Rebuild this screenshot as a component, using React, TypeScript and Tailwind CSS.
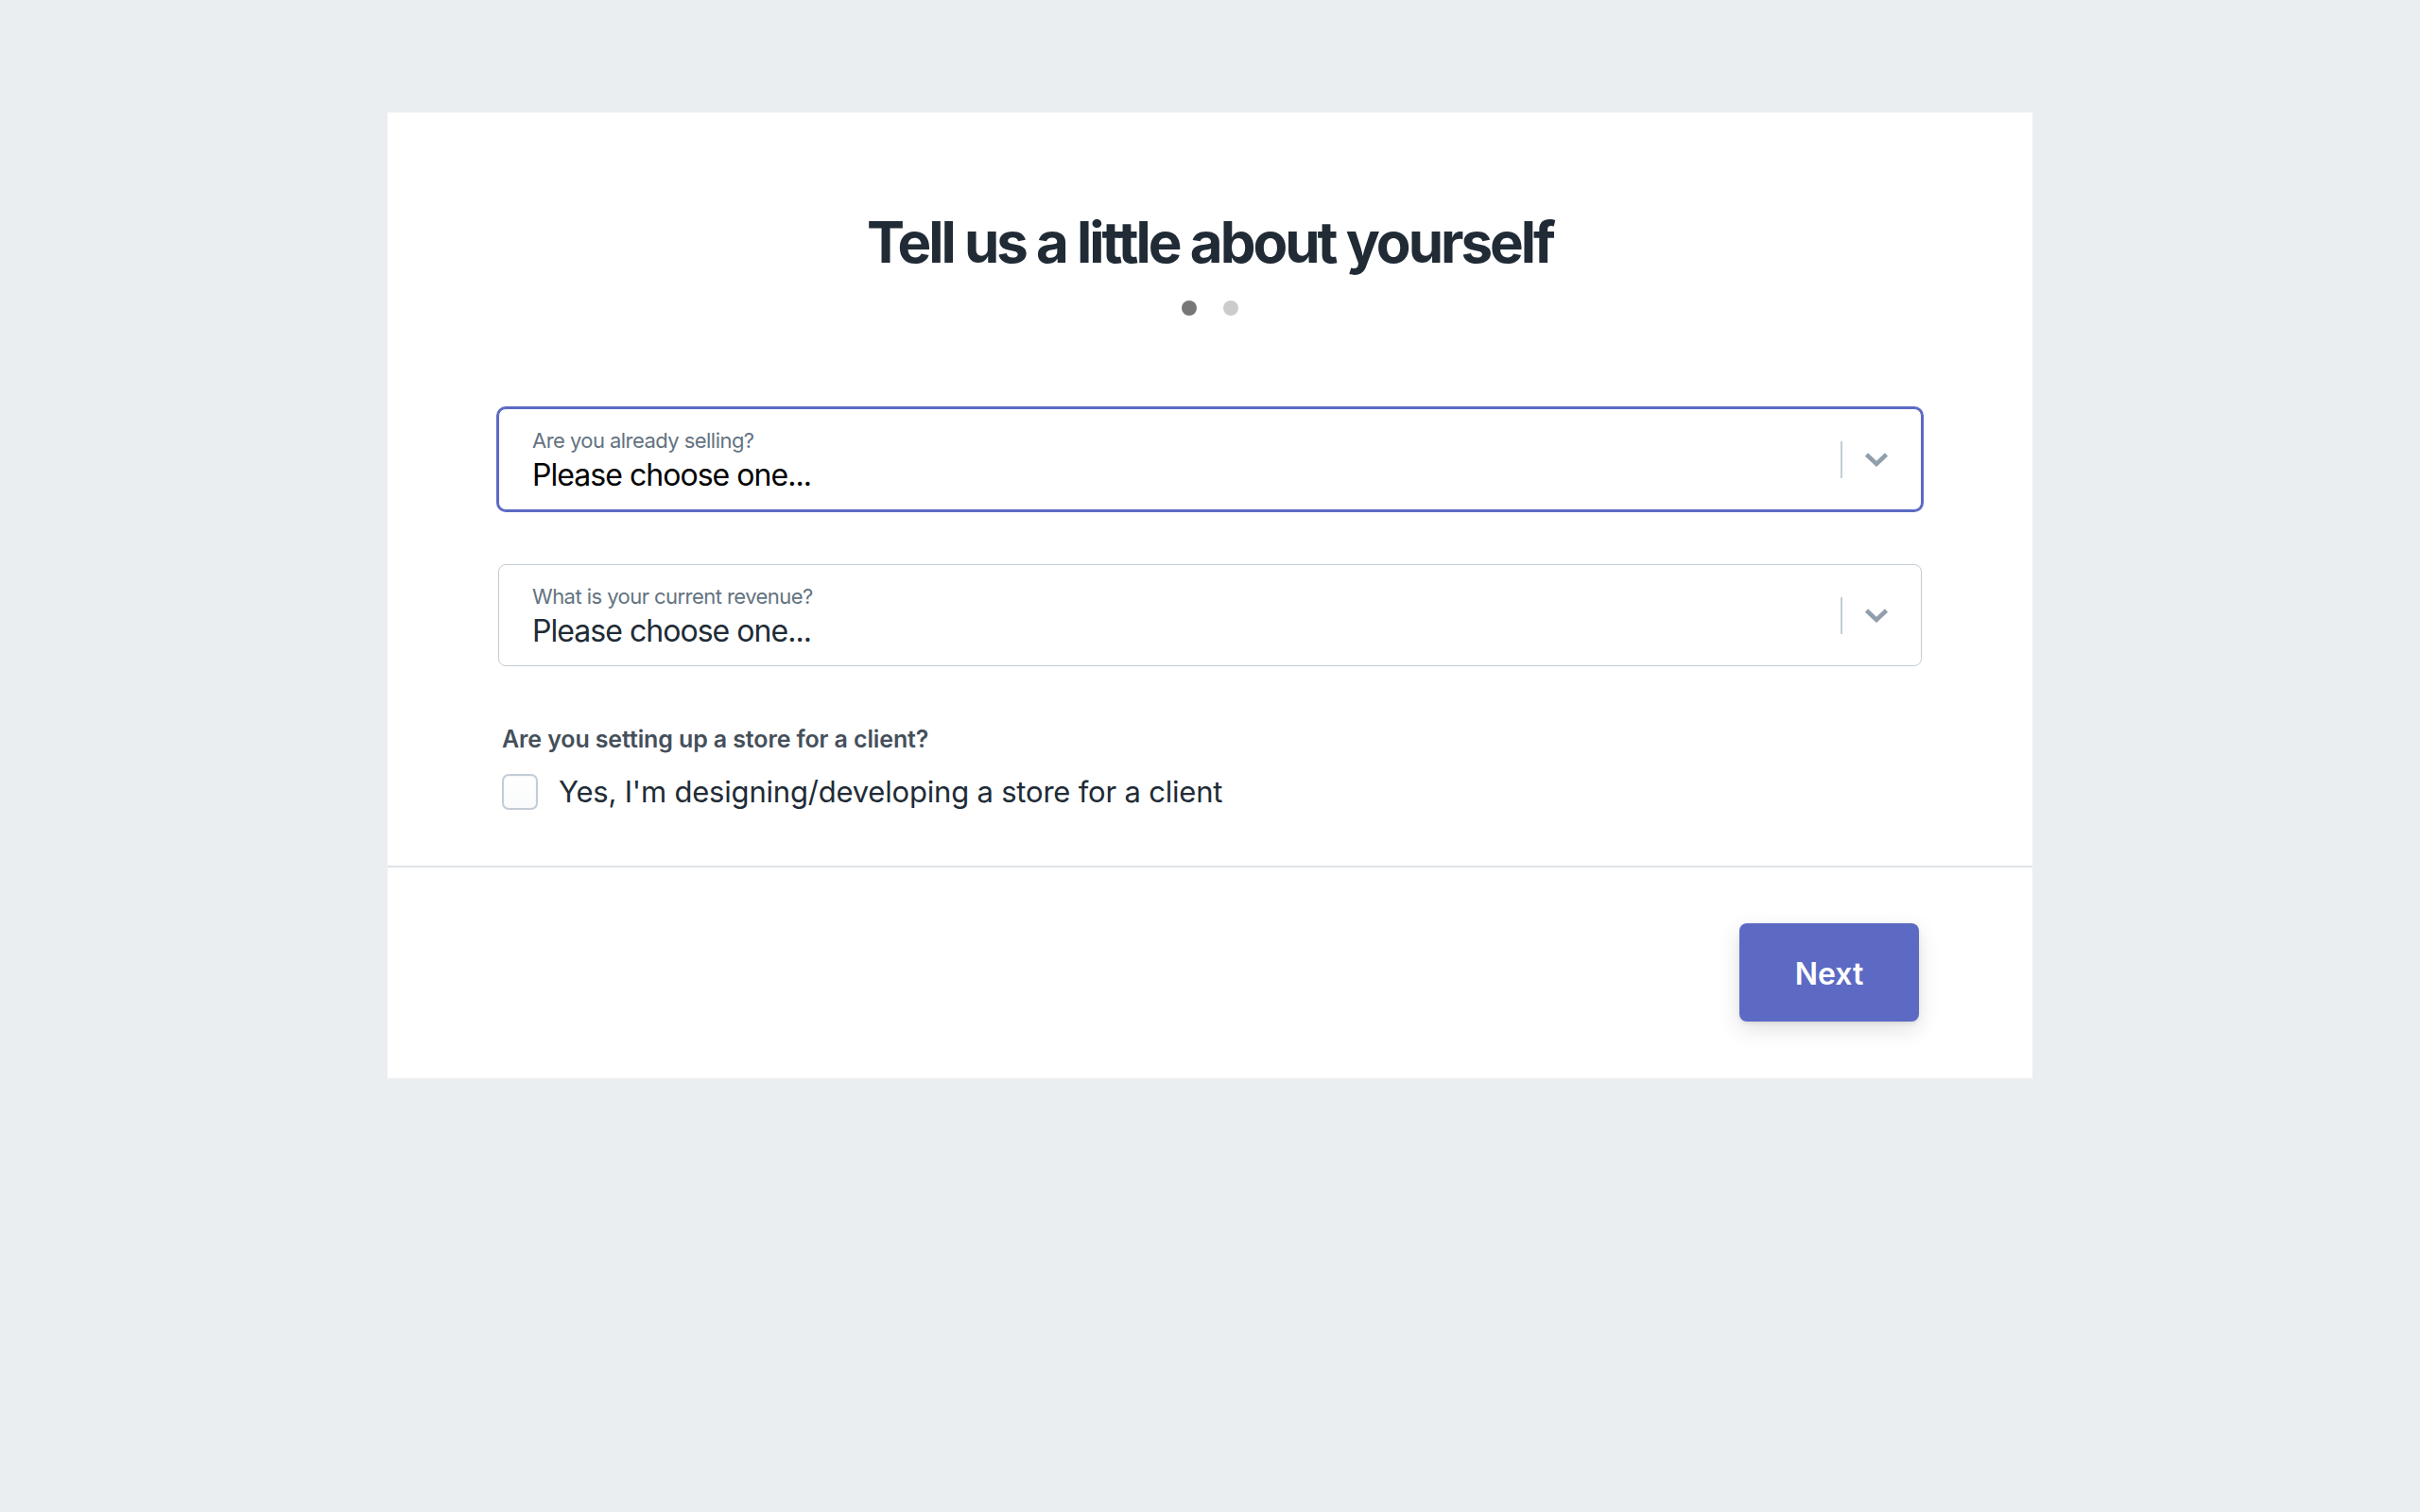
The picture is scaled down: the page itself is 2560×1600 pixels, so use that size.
import { useState } from "react";

interface SelectProps {
  label: string;
  focused?: boolean;
}

function SelectField({ label, focused }: SelectProps) {
  return (
    <div
      className={
        focused
          ? "flex items-center h-[108px] rounded-lg border border-[#5c6ac4] ring-2 ring-[#5c6ac4] bg-white"
          : "flex items-center h-[108px] rounded-lg border border-[#c4cdd5] bg-white"
      }
    >
      <div className="flex-1 pl-[35px] flex flex-col gap-y-[5px] pt-[3px]">
        <span className="text-[22px] leading-[26px] tracking-[-0.025em] text-[#637381]">
          {label}
        </span>
        <span
          className={
            focused
              ? "text-[32px] leading-[38px] tracking-[-0.03em] text-black"
              : "text-[32px] leading-[38px] tracking-[-0.03em] text-[#212b36]"
          }
        >
          Please choose one...
        </span>
      </div>
      <div className="w-[2px] h-[39px] bg-[#c4cdd5]" />
      <div className="w-[72px] mr-[11px] flex justify-center">
        <svg width="26" height="17" viewBox="0 0 26 17" fill="none">
          <path d="M2.5 3L13 13L23.5 3" stroke="#919eab" strokeWidth="4.5" />
        </svg>
      </div>
    </div>
  );
}

export default function App() {
  const [checked, setChecked] = useState(false);

  return (
    <div className="min-h-screen bg-[#ebeef0] pt-[119px] font-['Inter',sans-serif]">
      <div className="mx-auto w-[1740px] bg-white">
        <div className="px-[117px] pt-[101px] pb-[59px]">
          <h1 className="text-center text-[60px] leading-[72px] font-bold tracking-[-0.05em] text-[#212b36]">
            Tell us a little about yourself
          </h1>
          <div className="flex justify-center gap-x-[28px] mt-[26px]">
            <span className="w-4 h-4 rounded-full bg-[#777777]" />
            <span className="w-4 h-4 rounded-full bg-[#cccccc]" />
          </div>

          <div className="mt-[98px]">
            <SelectField label="Are you already selling?" focused />
          </div>
          <div className="mt-[57px]">
            <SelectField label="What is your current revenue?" />
          </div>

          <div className="pl-[4px]">
            <p className="mt-[62px] text-[25px] leading-[30px] font-semibold tracking-[-0.12px] text-[#454f5b]">
              Are you setting up a store for a client?
            </p>
            <label className="mt-[22px] flex items-center gap-x-[22px] cursor-pointer">
              <span
                onClick={() => setChecked(!checked)}
                className="w-[38px] h-[38px] rounded-[7px] border-2 border-[#c4cdd5] bg-gradient-to-b from-white to-[#f9fafb] shadow-[inset_0_1px_2px_rgba(0,0,0,0.05)]"
              />
              <span className="text-[31px] leading-[38px] tracking-[-0.2px] text-[#212b36]">
                Yes, I'm designing/developing a store for a client
              </span>
            </label>
          </div>
        </div>

        <div className="border-t-2 border-[#dfe3e8] flex justify-end px-[120px] pt-[59px] pb-[60px]">
          <button className="w-[190px] h-[104px] pt-[3px] rounded-lg bg-[#5c6ac4] text-white text-[32px] font-semibold shadow-[0_8px_24px_rgba(0,0,0,0.12),0_2px_4px_rgba(0,0,0,0.08)]">
            Next
          </button>
        </div>
      </div>
    </div>
  );
}
